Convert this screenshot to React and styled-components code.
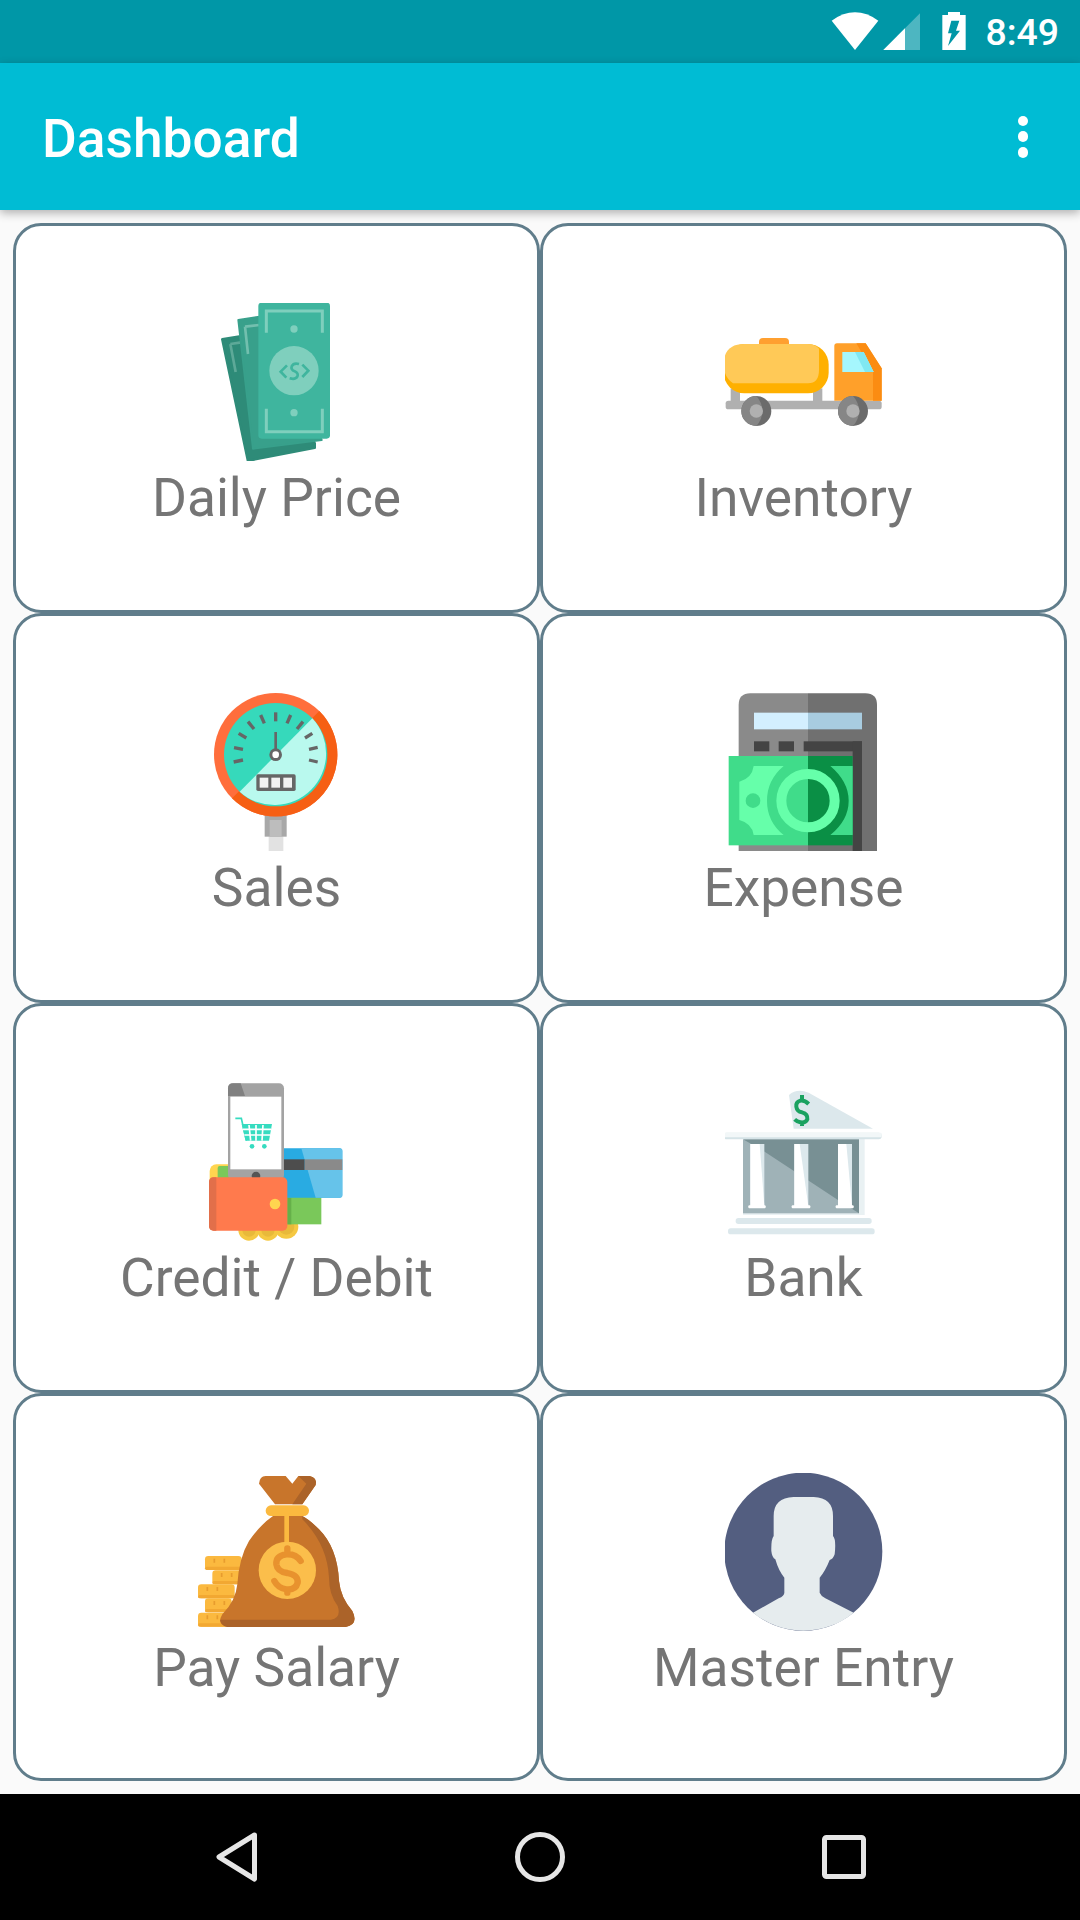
import React from "react";
import styled, { createGlobalStyle } from "styled-components";

const GlobalStyle = createGlobalStyle`
    html, body {
        margin: 0;
        padding: 0;
        background: #fafafa;
    }
    #root {
        width: 1080px;
        height: 1920px;
        overflow: hidden;
    }
`;

const Screen = styled.div`
    display: flex;
    flex-direction: column;
    width: 1080px;
    height: 1920px;
    background: #fafafa;
    font-family: Roboto, "Liberation Sans", sans-serif;
`;

const StatusBar = styled.div`
    display: flex;
    flex: none;
    align-items: center;
    justify-content: flex-end;
    height: 63px;
    padding-right: 21px;
    background: #0097a7;
    color: #fff;
    font-size: 37.4px;
    font-weight: 500;
`;

const StatusIcons = styled.svg`
    display: block;
    width: 135px;
    height: 63px;
    margin-right: 19px;
`;

const Toolbar = styled.header`
    position: relative;
    z-index: 1;
    display: flex;
    flex: none;
    align-items: center;
    justify-content: space-between;
    height: 147px;
    padding: 0 52px 0 42px;
    background: #00bcd4;
    box-shadow: 0 3px 9px rgba(0, 0, 0, 0.3);
`;

const Title = styled.h1`
    margin: 4px 0 0;
    color: #fff;
    font-size: 53.3px;
    font-weight: 500;
`;

const MenuDots = styled.div`
    display: flex;
    flex-direction: column;
    gap: 5.25px;

    span {
        width: 10.5px;
        height: 10.5px;
        border-radius: 50%;
        background: #fff;
    }
`;

const Grid = styled.main`
    display: grid;
    flex: 1;
    grid-template-columns: 1fr 1fr;
    grid-template-rows: 390px 390px 390px 1fr;
    min-height: 0;
    padding: 13px 13px 13px;
`;

const Card = styled.div`
    display: flex;
    flex-direction: column;
    align-items: center;
    box-sizing: border-box;
    padding-top: 77px;
    border: 3px solid #607d8b;
    border-radius: 28px;
    background: #fff;
`;

const Picture = styled.svg`
    display: block;
    flex: none;
    width: 158px;
    height: 158px;
`;

const Label = styled.div`
    margin-top: 10px;
    color: #757575;
    font-size: 53.3px;
    line-height: 55px;
`;

const NavBar = styled.nav`
    display: flex;
    flex: none;
    align-items: center;
    justify-content: space-between;
    height: 126px;
    padding: 0 206px;
    background: #000;
`;

const NavIcon = styled.svg`
    display: block;
    width: 60px;
    height: 60px;
    fill: none;
    stroke: #e6e6e6;
    stroke-width: 5;
    stroke-linejoin: round;
`;

const MoneyIcon = () => (
    <Picture viewBox="55 69 474 474">
        <path d="M128 178 L240 160 L405 490 V503 L205 542 Z" fill="#2e8b78" stroke="#2e8b78" strokeWidth="8" strokeLinejoin="round" />
        <path d="M152 192 L168 276 M152 192 L185 187" stroke="#5da998" strokeWidth="8" fill="none" />
        <path d="M176 120 L240 110 L426 480 L220 506 Z" fill="#38a08b" stroke="#38a08b" strokeWidth="6" strokeLinejoin="round" />
        <path d="M196 140 L205 222 M196 140 L238 135" stroke="#72bfae" strokeWidth="8" fill="none" />
        <rect x="236" y="68" width="215" height="408" rx="10" fill="#3fb59e" />
        <path d="M260 158 V93 H428 V158 M260 386 V455 H428 V386" stroke="#7fcfbd" strokeWidth="9" fill="none" />
        <circle cx="343" cy="147" r="11" fill="#7fcfbd" />
        <circle cx="343" cy="398" r="11" fill="#7fcfbd" />
        <circle cx="343" cy="272" r="74" fill="#7fcfbd" />
        <path d="M358 252 C335 246 328 268 345 274 C362 280 355 302 330 295 M322 256 L303 275 L320 293 M368 254 L386 272 L368 291" stroke="#3fb59e" strokeWidth="8" fill="none" />
    </Picture>
);

const TruckIcon = () => (
    <Picture viewBox="76 -21 474 474">
        <rect x="78" y="272" width="468" height="26" rx="8" fill="#b0b0b0" />
        <rect x="93" y="235" width="28" height="45" fill="#b0b0b0" />
        <rect x="340" y="235" width="28" height="45" fill="#b0b0b0" />
        <rect x="178" y="84" width="90" height="34" rx="12" fill="#ffa030" />
        <rect x="72" y="102" width="315" height="148" rx="62" fill="#ffb000" />
        <path d="M134 102 H325 Q345 102 358 116 V180 Q358 220 325 220 H100 Q72 200 72 164 Q72 102 134 102 Z" fill="#ffc957" />
        <path d="M404 272 V108 Q404 100 412 100 H498 L546 175 V272 Z" fill="#ffa02a" />
        <path d="M470 100 H498 L546 175 V272 H520 V186 Z" fill="#fb8c12" />
        <path d="M428 126 H492 L522 186 H428 Z" fill="#a5f7fd" />
        <path d="M466 126 H492 L522 186 H496 Z" fill="#80e8f2" />
        <circle cx="170" cy="303" r="45" fill="#6b6b6b" />
        <path d="M170 258 A45 45 0 0 0 170 348 A65 65 0 0 0 170 258 Z" fill="#868686" />
        <circle cx="170" cy="303" r="20" fill="#b0b0b0" />
        <circle cx="460" cy="303" r="45" fill="#6b6b6b" />
        <path d="M460 258 A45 45 0 0 0 460 348 A65 65 0 0 0 460 258 Z" fill="#868686" />
        <circle cx="460" cy="303" r="20" fill="#b0b0b0" />
    </Picture>
);

const gaugeTicks = [
    [132, 246, 160, 240],
    [133, 203, 160, 208],
    [147, 160, 170, 174],
    [175, 125, 193, 147],
    [213, 105, 224, 130],
    [258, 97, 258, 124],
    [303, 105, 292, 130],
    [340, 125, 322, 147],
    [368, 160, 346, 174],
    [384, 202, 358, 208],
    [384, 246, 358, 240],
];

const GaugeIcon = () => (
    <Picture viewBox="25 39 474 474">
        <rect x="237" y="465" width="44" height="50" fill="#e2e2e2" />
        <rect x="225" y="404" width="66" height="66" fill="#a8a8a8" />
        <rect x="240" y="420" width="36" height="50" fill="#bdbdbd" />
        <circle cx="258" cy="224" r="185" fill="#ff6e3c" />
        <path d="M389 93 A185 185 0 0 1 127 355 Z" fill="#f65f14" />
        <circle cx="258" cy="224" r="155" fill="#36d9bb" />
        <path d="M368 115 A155 155 0 0 1 150 335 Z" fill="#b9f9ee" />
        {gaugeTicks.map(([x1, y1, x2, y2]) => (
            <line key={`${x1}-${y1}`} x1={x1} y1={y1} x2={x2} y2={y2} stroke="#666" strokeWidth="10" />
        ))}
        <line x1="258" y1="156" x2="258" y2="212" stroke="#666" strokeWidth="8" />
        <circle cx="258" cy="224" r="19" fill="#666" />
        <circle cx="258" cy="224" r="10" fill="#fff" />
        <rect x="200" y="283" width="118" height="50" rx="5" fill="#666" />
        <rect x="210" y="293" width="26" height="30" fill="#f2f2f2" />
        <rect x="245" y="293" width="26" height="30" fill="#f2f2f2" />
        <rect x="281" y="293" width="26" height="30" fill="#f2f2f2" />
    </Picture>
);

const ExpenseIcon = () => (
    <Picture viewBox="44 39 474 474">
        <path d="M85 513 V75 Q85 40 120 40 H293 V513 Z" fill="#8a8a8a" />
        <path d="M293 40 H465 Q500 40 500 75 V513 H293 Z" fill="#707070" />
        <rect x="131" y="98" width="162" height="50" fill="#d3efff" />
        <rect x="293" y="98" width="162" height="50" fill="#a8cce0" />
        <rect x="131" y="184" width="46" height="30" fill="#444" />
        <rect x="205" y="184" width="46" height="30" fill="#444" />
        <rect x="280" y="184" width="175" height="30" fill="#444" />
        <rect x="427" y="184" width="28" height="329" fill="#444" />
        <rect x="55" y="228" width="238" height="268" fill="#40dc8a" />
        <rect x="293" y="228" width="134" height="268" fill="#0a8f45" />
        <path d="M130 258 H220 Q170 300 170 362 Q170 425 220 465 H130 Q125 430 87 420 V305 Q125 295 130 258 Z" fill="#66ffaa" />
        <path d="M360 258 H427 V465 H360 Q415 420 415 362 Q415 305 360 258 Z" fill="#40dc8a" />
        <circle cx="128" cy="362" r="22" fill="#40dc8a" />
        <circle cx="293" cy="362" r="80" fill="none" stroke="#66ffaa" strokeWidth="30" />
    </Picture>
);

const CreditIcon = () => (
    <Picture viewBox="25 39 474 474">
        <circle cx="178" cy="480" r="32" fill="#f5c842" />
        <circle cx="178" cy="480" r="20" fill="#e8b93a" />
        <circle cx="235" cy="480" r="32" fill="#f5c842" />
        <circle cx="235" cy="480" r="20" fill="#e8b93a" />
        <circle cx="290" cy="470" r="36" fill="#f5c842" />
        <circle cx="290" cy="470" r="24" fill="#e8b93a" />
        <rect x="250" y="375" width="145" height="88" fill="#7ac85a" />
        <rect x="293" y="383" width="12" height="80" fill="#66b04a" />
        <rect x="250" y="235" width="208" height="148" rx="8" fill="#29abe2" />
        <path d="M335 235 H450 Q458 235 458 243 V375 Q458 383 450 383 H378 Z" fill="#66c3ea" />
        <rect x="250" y="268" width="95" height="32" fill="#4d4d4d" />
        <rect x="345" y="268" width="113" height="32" fill="#8a8a8a" />
        <rect x="60" y="283" width="80" height="70" rx="20" fill="#ffd54f" />
        <rect x="84" y="288" width="50" height="50" rx="6" fill="#7ac85a" />
        <rect x="115" y="40" width="168" height="290" rx="15" fill="#a3a3a3" />
        <path d="M130 40 H153 L166 78 H115 V55 Q115 40 130 40 Z" fill="#808080" />
        <rect x="122" y="80" width="153" height="218" fill="#fff" />
        <circle cx="199" cy="318" r="13" fill="#555" />
        <path d="M137 145 H155 L170 212" stroke="#36dcc0" strokeWidth="5" fill="none" />
        <path d="M156 162 H247 L238 212 H168 Z" fill="#36dcc0" />
        <path d="M178 165 L183 212 M199 165 V212 M220 165 L217 212 M160 178 H244 M164 195 H241" stroke="#fff" strokeWidth="5" fill="none" />
        <circle cx="187" cy="229" r="7" fill="#36dcc0" />
        <circle cx="224" cy="229" r="7" fill="#36dcc0" />
        <rect x="58" y="322" width="235" height="160" rx="14" fill="#ff7a4d" />
        <path d="M72 322 H80 V482 H72 Q58 482 58 468 V336 Q58 322 72 322 Z" fill="#e26f4a" />
        <circle cx="256" cy="402" r="16" fill="#ffd54f" />
    </Picture>
);

const BankIcon = () => (
    <Picture viewBox="46 9 474 474">
        <path d="M238 45 Q262 24 297 38 L490 146 H252 Z" fill="#dce8ec" />
        <path d="M297 72 Q285 60 272 62 Q258 66 260 80 Q262 94 277 97 Q295 102 293 118 Q288 130 272 127 Q262 125 255 118 M277 45 V62 M277 127 V138" stroke="#1aa260" strokeWidth="12" fill="none" />
        <rect x="100" y="170" width="365" height="235" fill="#e9f1f3" />
        <rect x="100" y="178" width="348" height="222" fill="#9fb2b7" />
        <path d="M100 178 H448 V400 L385 360 L165 215 Z" fill="#789094" />
        <rect x="122" y="192" width="42" height="186" fill="#dce8ec" />
        <path d="M122 192 H150 L164 378 H122 Z" fill="#fff" />
        <rect x="254" y="192" width="42" height="186" fill="#dce8ec" />
        <path d="M254 192 H270 L296 378 H254 Z" fill="#fff" />
        <rect x="385" y="192" width="42" height="186" fill="#dce8ec" />
        <path d="M385 192 H410 L427 378 H385 Z" fill="#fff" />
        <rect x="116" y="376" width="52" height="9" rx="3" fill="#fff" />
        <rect x="246" y="376" width="56" height="9" rx="3" fill="#fff" />
        <rect x="378" y="376" width="54" height="9" rx="3" fill="#fff" />
        <rect x="42" y="158" width="474" height="20" rx="9" fill="#d5e3e7" />
        <rect x="42" y="158" width="474" height="14" rx="3" fill="#f2f7f8" />
        <rect x="78" y="414" width="408" height="18" rx="8" fill="#dce8ec" />
        <rect x="55" y="445" width="440" height="18" rx="8" fill="#dce8ec" />
    </Picture>
);

const coinRows = [
    [58, 285, 110],
    [80, 328, 90],
    [37, 370, 110],
    [58, 412, 80],
    [37, 455, 90],
];

const SalaryIcon = () => (
    <Picture viewBox="37 36 474 474">
        {coinRows.map(([x, y, w]) => (
            <g key={y}>
                <rect x={x} y={y} width={w} height="42" rx="10" fill="#fbb93f" />
                <path d={`M${x + 28} ${y + 8} V${y + 20} M${x + 58} ${y + 8} V${y + 20}`} stroke="#e89c2e" strokeWidth="5" />
                <rect x={x} y={y + 32} width={w} height="10" rx="5" fill="#f2a832" />
            </g>
        ))}
        <path d="M262 165 Q225 190 190 240 Q160 290 155 370 Q150 420 110 460 Q92 490 125 498 H480 Q520 490 500 450 Q465 410 460 360 Q455 260 400 205 Q370 175 350 165 Z" fill="#c8752b" />
        <path d="M350 165 Q370 175 400 205 Q455 260 460 360 Q465 410 500 450 Q520 490 480 498 H125 Q105 493 103 476 H436 Q468 470 456 435 Q430 400 430 350 Q425 250 350 175 Z" fill="#ab6329" />
        <path d="M220 68 Q222 45 240 45 H300 L320 68 L338 45 H372 Q395 50 390 72 L350 130 H268 Z" fill="#c8752b" />
        <path d="M338 45 H372 Q395 50 390 72 L350 130 H320 L362 68 Z" fill="#ab6329" />
        <rect x="296" y="160" width="14" height="85" fill="#fbb93f" />
        <rect x="240" y="133" width="130" height="32" rx="16" fill="#fbb93f" />
        <circle cx="305" cy="328" r="86" fill="#fbbe4b" />
        <path d="M345 300 Q330 278 302 280 Q270 284 272 310 Q275 332 305 336 Q338 342 336 365 Q330 388 302 385 Q278 382 266 360 M305 262 V280 M305 385 V395" stroke="#e8922e" strokeWidth="19" strokeLinecap="round" fill="none" />
    </Picture>
);

const MasterIcon = () => (
    <Picture viewBox="44 36 474 474">
        <circle cx="279" cy="272" r="237" fill="#535e80" />
        <path d="M190 165 Q190 110 250 108 H310 Q368 110 368 165 V225 Q378 235 373 280 Q368 295 358 297 Q345 330 328 350 V395 Q332 405 345 412 L430 455 A237 237 0 0 1 128 455 L205 412 Q222 405 222 395 V350 Q205 330 195 295 Q185 290 183 270 Q182 235 190 225 Z" fill="#e6ecee" />
    </Picture>
);

const items = [
    { label: "Daily Price", Icon: MoneyIcon },
    { label: "Inventory", Icon: TruckIcon },
    { label: "Sales", Icon: GaugeIcon },
    { label: "Expense", Icon: ExpenseIcon },
    { label: "Credit / Debit", Icon: CreditIcon },
    { label: "Bank", Icon: BankIcon },
    { label: "Pay Salary", Icon: SalaryIcon },
    { label: "Master Entry", Icon: MasterIcon },
];

const App = () => {
    return (
        <Screen>
            <GlobalStyle />
            <StatusBar>
                <StatusIcons viewBox="156 0 405 189">
                    <path d="M158 62 Q228 12 298 62 L228 150 Z" fill="#fff" />
                    <path d="M313 150 L423 40 V150 Z" fill="#fff" fillOpacity="0.3" />
                    <path d="M313 150 L378 85 V150 Z" fill="#fff" />
                    <path d="M507 36 H543 V45 H560 V150 H490 V45 H507 Z" fill="#fff" />
                    <path d="M517 62 H541 L531 92 H543 L507 138 L518 100 H507 Z" fill="#0097a7" />
                </StatusIcons>
                8:49
            </StatusBar>
            <Toolbar>
                <Title>Dashboard</Title>
                <MenuDots>
                    <span />
                    <span />
                    <span />
                </MenuDots>
            </Toolbar>
            <Grid>
                {items.map(({ label, Icon }) => (
                    <Card key={label}>
                        <Icon />
                        <Label>{label}</Label>
                    </Card>
                ))}
            </Grid>
            <NavBar>
                <NavIcon viewBox="0 0 60 60">
                    <path d="M48.5 8 L13 30 L48.5 52 Z" />
                </NavIcon>
                <NavIcon viewBox="0 0 60 60">
                    <circle cx="30" cy="30" r="22.5" />
                </NavIcon>
                <NavIcon viewBox="0 0 60 60">
                    <rect x="10.5" y="10.5" width="39" height="39" rx="2" />
                </NavIcon>
            </NavBar>
        </Screen>
    );
};

export default App;
